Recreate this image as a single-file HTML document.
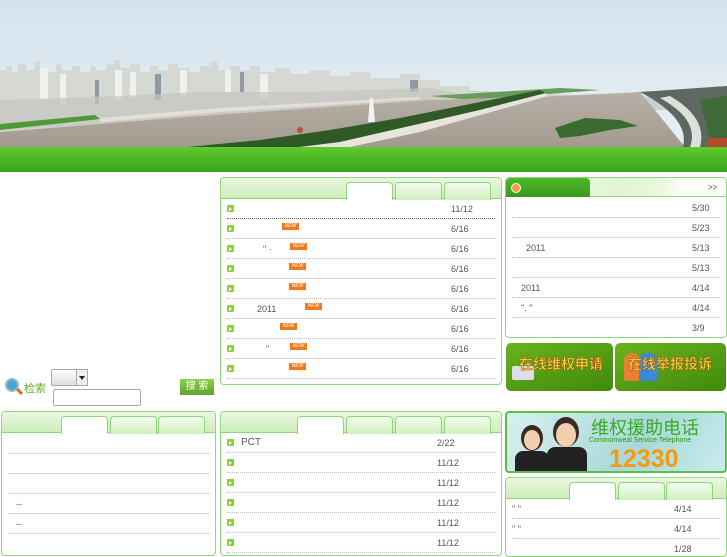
<!DOCTYPE html>
<html><head><meta charset="utf-8">
<style>
*{margin:0;padding:0;box-sizing:border-box}
body{width:727px;height:545px;overflow:hidden;background:#fff;font-family:"Liberation Sans","Noto Sans CJK SC",sans-serif;font-size:9px;color:#555;position:relative}
.a{position:absolute}
.box{position:absolute;border:1px solid #8fd67a;border-radius:4px;background:#fff;overflow:hidden}
.hd{position:absolute;left:0;right:0;top:0;height:21px;background:linear-gradient(#eaf8e2,#cdeeb9);border-bottom:1px solid #8fd67a}
.tab{position:absolute;top:4px;height:18px;border:1px solid #8fd67a;border-bottom:none;border-radius:4px 4px 0 0;background:linear-gradient(#f3fbee,#d2f0c0)}
.tab.on{background:#fff;height:18px}
.row{position:absolute;left:6px;right:6px;height:20px;border-bottom:1px dotted #bbb}
.ar{position:absolute;left:0;top:6px;width:7px;height:7px;background:#8ccc3e;border-radius:1px}
.ar:after{content:"";position:absolute;left:2px;top:1.5px;border-left:3px solid #fff;border-top:2px solid transparent;border-bottom:2px solid transparent}
.dt{position:absolute;top:5px}
.new{position:absolute;top:4px;width:17px;height:7px;background:#f07a1a;color:#fff;font-size:5px;line-height:7px;text-align:center}
</style></head><body>
<!-- banner -->
<svg class="a" style="left:0;top:0" width="727" height="173">
<defs>
<linearGradient id="sky" x1="0" y1="0" x2="0" y2="1"><stop offset="0" stop-color="#d3e3f0"/><stop offset="1" stop-color="#eaf0f2"/></linearGradient>
<linearGradient id="gr" x1="0" y1="0" x2="0" y2="1"><stop offset="0" stop-color="#5fca2c"/><stop offset="1" stop-color="#3aa51a"/></linearGradient>
<linearGradient id="rv" x1="0" y1="0" x2="0" y2="1"><stop offset="0" stop-color="#b7b0a6"/><stop offset="1" stop-color="#a39b90"/></linearGradient>
</defs>
<rect width="727" height="150" fill="url(#sky)"/>
<!-- far haze city -->
<path d="M300 98 L300 90 L420 88 L500 92 L600 96 L727 98 L727 110 L300 110Z" fill="#c8d0d4"/>
<!-- city -->
<path d="M0 130 L0 70 L6 70 L6 66 L12 66 L12 72 L18 72 L18 64 L26 64 L26 70 L34 70 L34 62 L40 62 L40 68 L48 68 L48 72 L56 72 L56 64 L62 64 L62 70 L72 70 L72 66 L80 66 L80 72 L90 72 L90 66 L96 66 L96 70 L106 70 L106 64 L114 64 L114 60 L120 60 L120 68 L130 68 L130 64 L140 64 L140 72 L150 72 L150 66 L158 66 L158 70 L168 70 L168 64 L178 64 L178 68 L190 68 L190 72 L200 72 L200 66 L210 66 L210 62 L218 62 L218 70 L230 70 L230 66 L240 66 L240 70 L250 70 L250 66 L260 66 L260 72 L275 72 L275 68 L290 68 L290 74 L310 74 L310 70 L330 70 L330 76 L350 76 L350 72 L370 72 L370 78 L400 78 L400 74 L420 74 L420 80 L440 80 L440 86 L470 86 L470 92 L520 94 L560 96 L430 102 L200 118 Z" fill="#d6d8d4"/>
<g fill="#f0f0ec"><rect x="40" y="68" width="8" height="32"/><rect x="115" y="70" width="7" height="30"/><rect x="130" y="72" width="6" height="26"/><rect x="225" y="70" width="6" height="22"/><rect x="260" y="74" width="8" height="24"/><rect x="60" y="74" width="6" height="30"/><rect x="180" y="70" width="7" height="26"/></g>
<g fill="#8f9aa0"><rect x="155" y="74" width="6" height="26"/><rect x="240" y="72" width="4" height="20"/><rect x="410" y="80" width="8" height="12"/><rect x="95" y="80" width="4" height="24"/></g>
<path d="M0 100 L120 96 L200 92 L300 92 L430 88 L470 96 L430 100 L200 118 L0 132Z" fill="#c4c6c0" opacity=".7"/>
<path d="M430 96 L560 88 L600 90 L470 100Z" fill="#6a9a5c"/>
<!-- river -->
<path d="M0 132 L200 116 L430 100 L560 96 L640 92 L685 147 L0 147Z" fill="url(#rv)"/>
<path d="M0 124 L95 115 L100 119 L0 130Z" fill="#4f9a35"/>
<path d="M100 118 L220 108 L420 97 L420 99 L220 112 L100 122Z" fill="#e4e0d6"/>
<!-- fountain -->
<path d="M368 122 L370 98 L373 98 L375 122Z" fill="#f2f4f4"/>
<!-- island -->
<path d="M188 147 L260 140 L330 130 L400 118 L470 104 L540 90 L546 93 L480 110 L410 126 L340 142 L300 147Z" fill="#2f5a28"/>
<path d="M300 147 L340 142 L410 126 L480 110 L546 93 L548 96 L420 132 L350 147Z" fill="#e6e4dc"/>
<circle cx="300" cy="130" r="3" fill="#c0502a"/>
<path d="M555 128 L585 118 L620 120 L638 126 L610 130 L580 136 L560 138Z" fill="#3a6a2e"/>
<!-- right shore -->
<path d="M640 92 L727 86 L727 147 L683 147 Q690 118 640 92Z" fill="#5c6860"/>
<path d="M660 98 Q700 120 690 147 L700 147 Q708 118 670 96Z" fill="#dde0dc"/>
<path d="M700 100 L727 96 L727 147 L712 147Z" fill="#3f6a36"/>
<rect x="708" y="138" width="19" height="9" fill="#b34a2a"/>
<rect y="147" width="727" height="25" fill="url(#gr)"/>
</svg>
<!-- search -->
<div class="a" style="left:5px;top:378px;width:14px;height:14px;border-radius:50%;border:2px solid #9bb;background:#4aa3e0"></div>
<div class="a" style="left:16px;top:390px;width:7px;height:3px;background:#d07020;transform:rotate(45deg)"></div>
<div class="a" style="left:24px;top:380px;font-size:11px;color:#6aaa30">检索</div>
<div class="a" style="left:51px;top:369px;width:37px;height:17px;border:1px solid #aaa;border-radius:2px;background:linear-gradient(#fff,#ddd)"></div>
<div class="a" style="left:76px;top:369px;width:12px;height:17px;border:1px solid #aaa;background:#eee"></div>
<div class="a" style="left:79px;top:376px;border-top:4px solid #222;border-left:3px solid transparent;border-right:3px solid transparent"></div>
<div class="a" style="left:53px;top:389px;width:88px;height:17px;border:1px solid #aaa;border-radius:2px"></div>
<div class="a" style="left:180px;top:379px;width:34px;height:16px;background:linear-gradient(#8ed04a,#5ea52a);color:#fff;font-size:10px;text-align:center;line-height:16px">搜 索</div>

<!-- middle box 1 -->
<div class="box" style="left:220px;top:177px;width:282px;height:208px">
<div class="hd"></div>
<div class="tab on" style="left:125px;width:47px"></div>
<div class="tab" style="left:174px;width:47px"></div>
<div class="tab" style="left:223px;width:47px"></div>
<div class="row" style="top:21px;border-bottom:1px dotted #666"><i class="ar"></i><span class="dt" style="left:224px">11/12</span></div>
<div class="row" style="top:41px"><i class="ar"></i><i class="new" style="left:55px">NEW</i><span class="dt" style="left:224px">6/16</span></div>
<div class="row" style="top:61px"><i class="ar"></i><span class="dt" style="left:36px">" ·</span><i class="new" style="left:63px">NEW</i><span class="dt" style="left:224px">6/16</span></div>
<div class="row" style="top:81px"><i class="ar"></i><i class="new" style="left:62px">NEW</i><span class="dt" style="left:224px">6/16</span></div>
<div class="row" style="top:101px"><i class="ar"></i><i class="new" style="left:62px">NEW</i><span class="dt" style="left:224px">6/16</span></div>
<div class="row" style="top:121px"><i class="ar"></i><span class="dt" style="left:30px">2011</span><i class="new" style="left:78px">NEW</i><span class="dt" style="left:224px">6/16</span></div>
<div class="row" style="top:141px"><i class="ar"></i><i class="new" style="left:53px">NEW</i><span class="dt" style="left:224px">6/16</span></div>
<div class="row" style="top:161px"><i class="ar"></i><span class="dt" style="left:39px">"</span><i class="new" style="left:63px">NEW</i><span class="dt" style="left:224px">6/16</span></div>
<div class="row" style="top:181px"><i class="ar"></i><i class="new" style="left:62px">NEW</i><span class="dt" style="left:224px">6/16</span></div>
</div>

<!-- right box 1 -->
<div class="box" style="left:505px;top:177px;width:222px;height:161px">
<div class="hd" style="height:19px;background:linear-gradient(90deg,#fff 0,#e0f5d2 50%,#e8f8de 70%,#fafff8 80%)"></div>
<div class="a" style="left:0;top:0;width:84px;height:19px;background:linear-gradient(#4cb82a,#3a9a1e);border-radius:4px 4px 0 0"></div>
<div class="a" style="left:5px;top:5px;width:10px;height:10px;border-radius:50%;background:#f0a040;border:1px solid #fff"></div>
<div class="a" style="left:202px;top:5px;font-size:8px;color:#444">&gt;&gt;</div>
<div class="row" style="top:20px"><span class="dt" style="left:180px">5/30</span></div>
<div class="row" style="top:40px"><span class="dt" style="left:180px">5/23</span></div>
<div class="row" style="top:60px"><span class="dt" style="left:14px">2011</span><span class="dt" style="left:180px">5/13</span></div>
<div class="row" style="top:80px"><span class="dt" style="left:180px">5/13</span></div>
<div class="row" style="top:100px"><span class="dt" style="left:9px">2011</span><span class="dt" style="left:180px">4/14</span></div>
<div class="row" style="top:120px"><span class="dt" style="left:9px">". "</span><span class="dt" style="left:180px">4/14</span></div>
<div class="row" style="top:140px;border:none"><span class="dt" style="left:180px">3/9</span></div>
</div>

<!-- buttons -->
<div class="a" style="left:506px;top:343px;width:107px;height:48px;border-radius:5px;background:linear-gradient(160deg,#6ab21e,#3f8a0c);overflow:hidden">
<div class="a" style="left:6px;top:23px;width:22px;height:14px;background:#dde;border-radius:2px"></div>
<div class="a" style="left:13px;top:11px;font-size:14px;color:#f6d640;font-weight:bold;-webkit-text-stroke:0.5px #a05010;white-space:nowrap">在线维权申请</div></div>
<div class="a" style="left:615px;top:343px;width:111px;height:48px;border-radius:5px;background:linear-gradient(160deg,#6ab21e,#3f8a0c);overflow:hidden">
<div class="a" style="left:9px;top:10px;width:16px;height:28px;background:#e88030;border-radius:8px 8px 2px 2px"></div>
<div class="a" style="left:24px;top:10px;width:18px;height:28px;background:#3a8ad8;border-radius:8px 8px 2px 2px"></div>
<div class="a" style="left:13px;top:11px;font-size:14px;color:#f6d640;font-weight:bold;-webkit-text-stroke:0.5px #a05010;white-space:nowrap">在线举报投诉</div></div>

<!-- bottom left -->
<div class="box" style="left:1px;top:411px;width:215px;height:145px">
<div class="hd"></div>
<div class="tab on" style="left:59px;width:47px"></div>
<div class="tab" style="left:108px;width:47px"></div>
<div class="tab" style="left:156px;width:47px"></div>
<div class="row" style="top:22px"></div>
<div class="row" style="top:42px"></div>
<div class="row" style="top:62px"></div>
<div class="row" style="top:82px"><span class="dt" style="left:8px">--</span></div>
<div class="row" style="top:102px"><span class="dt" style="left:8px">--</span></div>
</div>

<!-- bottom middle -->
<div class="box" style="left:220px;top:411px;width:282px;height:145px">
<div class="hd"></div>
<div class="tab on" style="left:76px;width:47px"></div>
<div class="tab" style="left:125px;width:47px"></div>
<div class="tab" style="left:174px;width:47px"></div>
<div class="tab" style="left:223px;width:47px"></div>
<div class="row" style="top:21px"><i class="ar"></i><span class="dt" style="left:14px;font-size:10px;top:4px">PCT</span><span class="dt" style="left:210px">2/22</span></div>
<div class="row" style="top:41px"><i class="ar"></i><span class="dt" style="left:210px">11/12</span></div>
<div class="row" style="top:61px"><i class="ar"></i><span class="dt" style="left:210px">11/12</span></div>
<div class="row" style="top:81px"><i class="ar"></i><span class="dt" style="left:210px">11/12</span></div>
<div class="row" style="top:101px"><i class="ar"></i><span class="dt" style="left:210px">11/12</span></div>
<div class="row" style="top:121px"><i class="ar"></i><span class="dt" style="left:210px">11/12</span></div>
</div>

<!-- 12330 -->
<div class="a" style="left:505px;top:411px;width:222px;height:62px;border:2px solid #5cc040;border-radius:4px;background:linear-gradient(120deg,#d8f0f0,#a8d8d8 60%,#c8ecec);overflow:hidden">
<div class="a" style="left:14px;top:12px;width:22px;height:26px;border-radius:50%;background:#3a2a20"></div>
<div class="a" style="left:17px;top:17px;width:16px;height:20px;border-radius:50%;background:#f2cfb0"></div>
<div class="a" style="left:8px;top:38px;width:34px;height:22px;background:#222;border-radius:8px 8px 0 0"></div>
<div class="a" style="left:46px;top:4px;width:26px;height:30px;border-radius:50%;background:#3a2a20"></div>
<div class="a" style="left:49px;top:10px;width:20px;height:24px;border-radius:50%;background:#f2cfb0"></div>
<div class="a" style="left:40px;top:34px;width:40px;height:26px;background:#222;border-radius:8px 8px 0 0"></div>
<div class="a" style="left:84px;top:1px;font-size:18px;color:#3aaa20;white-space:nowrap">维权援助电话</div>
<div class="a" style="left:82px;top:24px;font-size:7px;color:#2a9a10;white-space:nowrap">Commonweal Service Telephone</div>
<div class="a" style="left:102px;top:33px;font-size:25px;font-weight:bold;color:#f59a10;line-height:26px">12330</div>
</div>

<!-- bottom right -->
<div class="box" style="left:505px;top:477px;width:222px;height:80px">
<div class="hd"></div>
<div class="tab on" style="left:63px;width:47px"></div>
<div class="tab" style="left:112px;width:47px"></div>
<div class="tab" style="left:160px;width:47px"></div>
<div class="row" style="top:21px"><span class="dt" style="left:0">" "</span><span class="dt" style="left:162px">4/14</span></div>
<div class="row" style="top:41px"><span class="dt" style="left:0">" "</span><span class="dt" style="left:162px">4/14</span></div>
<div class="row" style="top:61px"><span class="dt" style="left:162px">1/28</span></div>
</div>
</body></html>
